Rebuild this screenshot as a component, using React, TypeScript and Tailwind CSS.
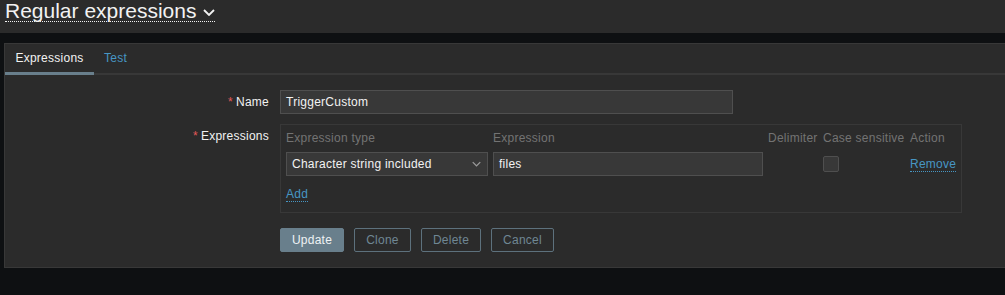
import React from "react";

function Chevron({ className }: { className?: string }) {
  return (
    <svg className={className} viewBox="0 0 12 7" fill="none">
      <path d="M1 1l5 5 5-5" stroke="currentColor" strokeWidth="1.8" />
    </svg>
  );
}

export default function App() {
  return (
    <div
      className="w-[1005px] h-[295px] overflow-hidden bg-[#0e1012] text-[12px] text-[#f2f2f2] tracking-[0.25px]"
      style={{ fontFamily: '"Liberation Sans", Arial, sans-serif' }}
    >
      {/* Header */}
      <div className="h-[33px] bg-[#2b2b2b] px-[5px] tracking-normal">
        <div className="inline-flex items-start border-b border-dotted border-[#f2f2f2] h-[22px]">
          <span className="text-[21px] leading-[21px]">Regular expressions</span>
          <Chevron className="w-[12px] h-[7px] ml-[7px] mt-[9px] text-[#f2f2f2]" />
        </div>
      </div>

      {/* Panel */}
      <div className="mt-[10px] ml-[4px] h-[225px] bg-[#2b2b2b] border border-r-0 border-[#383838] flex flex-col">
        {/* Tabs */}
        <div className="flex h-[31px] border-b-2 border-[#383838]">
          <div className="px-[10px] w-[89px] h-[31px] leading-[28px] border-b-[3px] border-[#697f8c] text-[#f2f2f2] text-center">
            Expressions
          </div>
          <div className="px-[10px] h-[28px] leading-[28px] text-[#4796c4]">Test</div>
        </div>

        {/* Form */}
        <div className="pt-[15px] flex flex-col">
          {/* Name row */}
          <div className="flex">
            <div className="w-[275px] pr-[11px] h-[24px] leading-[24px] text-right">
              <span className="text-[#e45959] mr-[3px]">*</span>Name
            </div>
            <div className="w-[453px] h-[24px] bg-[#383838] border border-[#4f4f4f] px-[5px] leading-[22px]">
              TriggerCustom
            </div>
          </div>

          {/* Expressions row */}
          <div className="flex mt-[10px]">
            <div className="w-[275px] pr-[11px] h-[24px] leading-[24px] text-right">
              <span className="text-[#e45959] mr-[3px]">*</span>Expressions
            </div>
            <div className="w-[682px] border border-[#383838] px-[5px] pt-[6px] pb-[12px]">
              <div className="grid grid-cols-[202px_270px_50px_82px_46px] gap-x-[5px] h-[14px] leading-[14px] text-[#737373]">
                <div>Expression type</div>
                <div>Expression</div>
                <div>Delimiter</div>
                <div className="whitespace-nowrap">Case sensitive</div>
                <div>Action</div>
              </div>
              <div className="grid grid-cols-[202px_270px_50px_82px_46px] gap-x-[5px] mt-[7px] h-[24px] items-center">
                <div className="h-[24px] bg-[#383838] border border-[#4f4f4f] pl-[5px] pr-[6px] flex items-center justify-between">
                  <span>Character string included</span>
                  <Chevron className="w-[9px] h-[6px] text-[#9a9a9a]" />
                </div>
                <div className="h-[24px] bg-[#383838] border border-[#4f4f4f] px-[5px] leading-[22px]">files</div>
                <div></div>
                <div>
                  <div className="w-[16px] h-[16px] bg-[#383838] border border-[#4f4f4f] rounded-[2px]"></div>
                </div>
                <div>
                  <span className="text-[#4796c4] border-b border-dotted border-[#4796c4] leading-[14px]">Remove</span>
                </div>
              </div>
              <div className="mt-[9px] h-[15px]">
                <span className="inline-block text-[#4796c4] border-b border-dotted border-[#4796c4] leading-[14px]">Add</span>
              </div>
            </div>
          </div>

          {/* Buttons */}
          <div className="flex gap-[10px] mt-[15px] ml-[275px]">
            <button className="h-[24px] w-[64px] bg-[#697f8c] border border-[#697f8c] rounded-[2px] text-[#eef2f4] text-[12px]">
              Update
            </button>
            <button className="h-[24px] w-[57px] border border-[#5d717d] rounded-[2px] text-[#6f8794] text-[12px]">
              Clone
            </button>
            <button className="h-[24px] w-[60px] border border-[#5d717d] rounded-[2px] text-[#6f8794] text-[12px]">
              Delete
            </button>
            <button className="h-[24px] w-[63px] border border-[#5d717d] rounded-[2px] text-[#6f8794] text-[12px]">
              Cancel
            </button>
          </div>
        </div>
      </div>
    </div>
  );
}
